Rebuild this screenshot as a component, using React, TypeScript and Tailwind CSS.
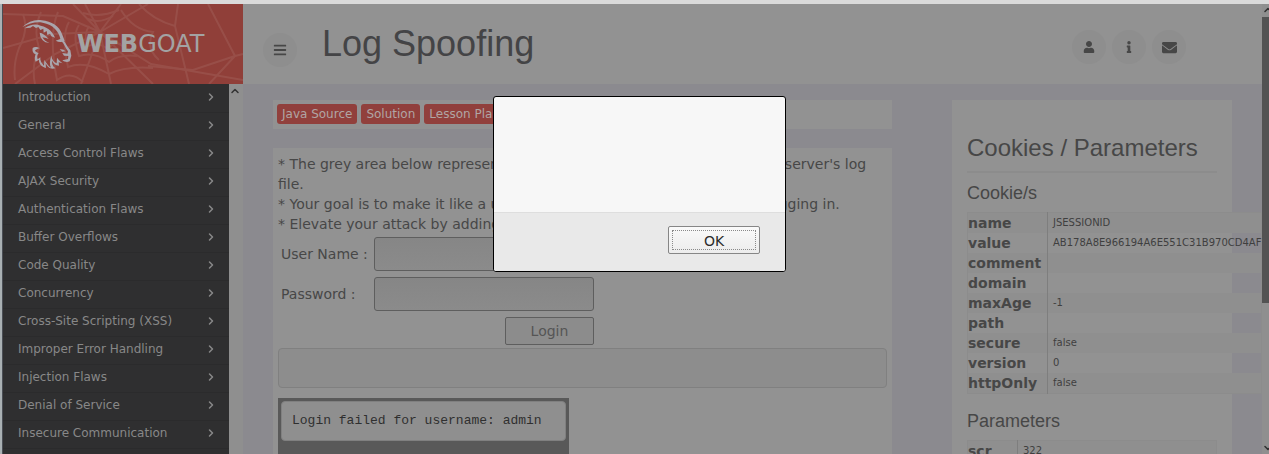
import { FaBars, FaEnvelope, FaInfo, FaUser } from "react-icons/fa";
import { FiChevronDown, FiChevronRight, FiChevronUp } from "react-icons/fi";

const categories = [
  "Introduction",
  "General",
  "Access Control Flaws",
  "AJAX Security",
  "Authentication Flaws",
  "Buffer Overflows",
  "Code Quality",
  "Concurrency",
  "Cross-Site Scripting (XSS)",
  "Improper Error Handling",
  "Injection Flaws",
  "Denial of Service",
  "Insecure Communication",
];

const cookie = [
  { name: "name", value: "JSESSIONID" },
  { name: "value", value: "AB178A8E966194A6E551C31B970CD4AF" },
  { name: "comment", value: "" },
  { name: "domain", value: "" },
  { name: "maxAge", value: "-1" },
  { name: "path", value: "" },
  { name: "secure", value: "false" },
  { name: "version", value: "0" },
  { name: "httpOnly", value: "false" },
];

const params = [{ name: "scr", value: "322" }];

function SpiderWeb() {
  return (
    <svg
      className="absolute inset-0 h-full w-full"
      viewBox="0 0 240 80"
      preserveAspectRatio="none"
      fill="none"
      stroke="#a3625b"
      strokeWidth="2"
      opacity="0.45"
      aria-hidden="true"
    >
      {/* threads */}
      <path d="M97 28 70 0M97 28 82 0M97 28 118 0M97 28 145 0M97 28 60 12 0 10M97 28 50 30 0 44M97 28 52 50 12 80M97 28 78 80M97 28 108 80M97 28 150 80M97 28 148 60 240 76" />
      <path d="M175 0 172 22 186 80M205 0 232 52 240 50M232 52 206 80M145 62 190 66 232 52" />
      {/* rings */}
      <path d="M85 15Q97 20 110 12M80 9Q97 14 116 6M86 22Q80 31 85 42 96 38 105 45 110 38 118 40M76 21Q69 31 76 52 91 47 106 58 116 50 134 52M66 18Q58 31 65 63 82 56 106 70 122 62 150 64" />
      <path d="M55 8Q45 31 54 76 68 66 80 78M38 8Q30 26 36 44 28 62 32 80M20 10Q26 26 16 44 10 60 12 76M118 6Q130 26 150 28 142 44 156 56M136 0Q150 16 172 22" />
    </svg>
  );
}

function GoatLogo() {
  return (
    <svg
      className="h-[51px] w-[50px] shrink-0"
      viewBox="66 54 150 153"
      fill="#a9a5ac"
      aria-hidden="true"
    >
      {/* horns */}
      <path d="M67 78C84 62 104 55 125 58 155 61 178 75 187 101L194 119C186 124 177 124 167 119L181 114C177 92 160 71 128 65 108 61 88 67 67 78Z" />
      <path d="M74 82C90 70 108 68 122 74 147 80 159 94 165 110L154 106 150 98 142 102 140 90 131 95 130 83 121 87 115 78 108 81 99 75 91 80Z" />
      {/* ear */}
      <path d="M119 95C127 96 137 103 146 114 137 110 132 111 127 108 130 116 138 122 148 125 134 126 121 116 119 95Z" />
      {/* face */}
      <path d="M190 117C198 127 201 136 211 148L214 164 209 181C202 185 193 183 187 178L204 174 205 165 192 164 187 156 202 158 204 151C195 139 193 128 184 120Z" />
      <path d="M179 144 190 146 197 151 187 152Z" />
      {/* beard */}
      <path d="M98 141C103 136 112 137 119 142 113 143 108 146 105 149 109 153 112 155 116 156 111 162 111 168 113 175L121 169C120 180 125 187 132 194L133 177C140 186 144 195 153 200 148 190 149 178 154 164 156 176 161 183 170 187L171 170C177 177 182 183 188 187L176 184 177 194C166 193 160 188 157 179 155 188 158 195 166 202 151 207 142 197 137 187L138 201C125 197 116 188 117 176L107 182C103 174 104 167 107 160 99 157 96 151 98 141Z" />
    </svg>
  );
}

type PropertyTableProps = {
  label: string;
  rows: { name: string; value: string }[];
  nameWidth: string;
};

function PropertyTable({ label, rows, nameWidth }: PropertyTableProps) {
  return (
    <table aria-label={label} className="w-full border border-[#8c8c8c]">
      <tbody>
        {rows.map((row) => (
          <tr key={row.name} className="h-5 odd:bg-[#8f8f8f]">
            <th
              scope="row"
              className={`${nameWidth} border-r border-[#7e7e7e] text-left text-sm leading-5 font-bold`}
            >
              {row.name}
            </th>
            <td className="pl-[5px] text-[10px] leading-5 text-[#3f3f3f]">{row.value}</td>
          </tr>
        ))}
      </tbody>
    </table>
  );
}

function Header() {
  const round =
    "flex h-[34px] w-[34px] items-center justify-center rounded-full bg-[#8e8e8e] text-[#474747]";

  return (
    <header className="flex h-20 shrink-0 bg-[#929292]">
      <a href="#home" className="relative flex w-[240px] shrink-0 items-center bg-[#903f39] pl-[19px]">
        <SpiderWeb />
        <span className="relative flex items-center gap-[5px]">
          <GoatLogo />
          <span className="text-2xl leading-8 text-[#a3a3a3]">
            <b>WEB</b>GOAT
          </span>
        </span>
      </a>
      <div className="flex flex-1 items-center pr-[76px] pl-5">
        <button type="button" aria-label="Toggle menu" className={`${round} mt-3`}>
          <FaBars size={14} />
        </button>
        <h1 className="ml-[25px] flex-1 font-['Liberation_Sans',sans-serif] text-4xl leading-10 text-[#444446]">
          Log Spoofing
        </h1>
        <div className="mt-1.5 flex gap-[6px]">
          <button type="button" aria-label="User" className={round}>
            <FaUser size={12} />
          </button>
          <button type="button" aria-label="About" className={round}>
            <FaInfo size={12} />
          </button>
          <button type="button" aria-label="Contact" className={round}>
            <FaEnvelope size={15} />
          </button>
        </div>
      </div>
    </header>
  );
}

function Sidebar() {
  return (
    <div className="flex w-[240px] shrink-0 overflow-hidden">
      <nav className="flex-1 bg-[#2f2f30] pt-px">
        {categories.map((name) => (
          <a
            key={name}
            href="#category"
            className="flex h-7 items-center justify-between border-b border-[#2b2b2c] pr-3 pb-1 pl-[15px] text-xs text-[#888888]"
          >
            {name}
            <FiChevronRight size={12} strokeWidth={3} />
          </a>
        ))}
      </nav>
      <div className="w-[14px] bg-[#8f8f8f] pt-[1px] text-[#333333]" aria-hidden="true">
        <FiChevronUp size={12} strokeWidth={3} />
      </div>
    </div>
  );
}

function Lesson() {
  const field =
    "h-[34px] w-[220px] rounded-[3px] border border-[#5e5e5e] bg-linear-to-b from-[#868686] to-[#8b8b8b] px-2";

  return (
    <main className="min-w-0 flex-1">
      <div className="flex gap-1 overflow-hidden bg-[#929292] px-1 py-1 pb-[5px]">
        {["Java Source", "Solution", "Lesson Plan"].map((label) => (
          <button
            key={label}
            type="button"
            className="h-5 rounded-[3px] bg-[#91403c] px-[5px] text-xs leading-5 text-[#b0a5a4]"
          >
            {label}
          </button>
        ))}
      </div>

      <section className="mt-[19px] bg-[#929292] px-[5px] pt-[6px] pb-10">
        <p className="text-sm leading-5">
          * The grey area below represents what is going to be logged in the web server's log file.
          <br />
          * Your goal is to make it like a username "admin" has succeeded into logging in.
          <br />
          * Elevate your attack by adding a script to the log file.
        </p>
        <form
          className="grid grid-cols-[87px_220px] items-center gap-x-[6px] gap-y-[6px] p-[3px] text-sm"
          onSubmit={(e) => e.preventDefault()}
        >
          <label htmlFor="username">User Name :</label>
          <input id="username" type="text" className={field} />
          <label htmlFor="password">Password :</label>
          <input id="password" type="password" className={field} />
          <button
            type="submit"
            className="col-start-2 h-7 w-[89px] justify-self-end rounded-[2px] border border-[#5e5e5e] bg-[#8c8c8c] text-[#555555]"
          >
            Login
          </button>
        </form>
        <pre className="h-10 rounded-[4px] border border-[#808080] bg-[#8d8d8d]" />
        <div className="mt-[10px] w-fit border-3 border-b-[13px] border-[#595959] bg-[#595959]">
          <pre className="rounded-[4px] border border-[#808080] bg-[#8f8f8f] py-[9px] pr-[23px] pl-[10px] font-['Liberation_Mono',monospace] text-[13px] leading-5 text-[#2f2f2f]">
            Login failed for username: admin
          </pre>
        </div>
      </section>
    </main>
  );
}

function CookiePanel() {
  return (
    <aside className="w-[280px] shrink-0 bg-[#929292] px-[15px] pt-[34px]">
      <h2 className="border-b-2 border-[#8c8c8c] pb-[9px] font-['Liberation_Sans',sans-serif] text-2xl leading-7">
        Cookies / Parameters
      </h2>
      <h3 className="pt-[10px] pb-[9px] font-['Liberation_Sans',sans-serif] text-lg leading-5">Cookie/s</h3>
      <PropertyTable label="Cookie/s" rows={cookie} nameWidth="w-20 min-w-20" />
      <h3 className="pt-[17px] pb-[9px] font-['Liberation_Sans',sans-serif] text-lg leading-5">Parameters</h3>
      <PropertyTable label="Parameters" rows={params} nameWidth="w-[50px]" />
    </aside>
  );
}

function AlertDialog() {
  return (
    <div className="absolute inset-0 flex items-start justify-center pt-24 pl-[10px]">
      <div
        role="alertdialog"
        aria-label="Alert"
        className="w-[293px] overflow-hidden rounded-[3px] border border-black bg-[#f7f7f7]"
      >
        <div className="h-[115px]" />
        <div className="flex justify-end border-t border-[#dedede] bg-[#e9e9e9] pt-[13px] pr-[25px] pb-[17px]">
          <button
            type="button"
            className="h-7 w-[92px] rounded-[2px] border border-[#868686] bg-linear-to-b from-[#fafafa] to-[#ececec] p-[3px] text-sm text-[#2b2b2b]"
          >
            <span className="flex h-full items-center justify-center border border-dotted border-[#8a8a8a] pt-px">
              OK
            </span>
          </button>
        </div>
      </div>
    </div>
  );
}

export default function App() {
  return (
    <div className="relative flex h-screen flex-col overflow-hidden border-t-4 border-t-[#dadada] bg-[#8b8a8f] font-['DejaVu_Sans',sans-serif] text-[#474747]">
      <div className="flex min-h-0 flex-1 border-l-2 border-[#a9b0b3]">
        <div className="flex min-w-0 flex-1 flex-col border-l border-[#4a4e55]">
          <Header />
          <div className="flex min-h-0 flex-1">
            <Sidebar />
            <div className="flex min-w-0 flex-1 items-start gap-[60px] overflow-hidden px-[30px] pt-4">
              <Lesson />
              <CookiePanel />
            </div>
          </div>
        </div>
        {/* page scrollbar */}
        <div className="flex w-[7px] shrink-0 flex-col overflow-hidden bg-[#8f8f8f] text-[#2f2f2f]" aria-hidden="true">
          <FiChevronUp size={12} strokeWidth={3} className="shrink-0" />
          <div className="mt-[1px] h-[286px] shrink-0 bg-[#535353]" />
          <FiChevronDown size={12} strokeWidth={3} className="mt-auto shrink-0" />
        </div>
      </div>
      <div className="absolute -top-1 right-0 bottom-0 left-0">
        <AlertDialog />
      </div>
    </div>
  );
}
